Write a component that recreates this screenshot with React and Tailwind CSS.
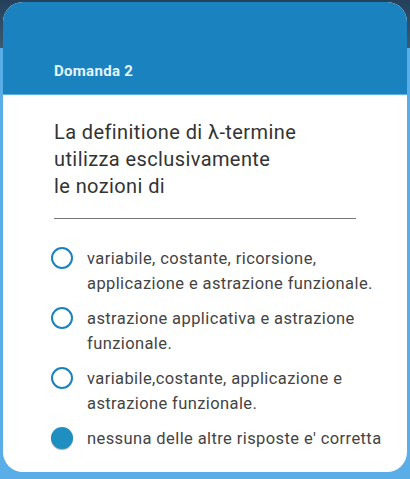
import { useState } from 'react'

const options = [
  'variabile, costante, ricorsione, applicazione e astrazione funzionale.',
  'astrazione applicativa e astrazione funzionale.',
  'variabile,costante, applicazione e astrazione funzionale.',
  "nessuna delle altre risposte e' corretta",
]

export default function App() {
  const [selected, setSelected] = useState(3)

  return (
    <div
      className="w-[410px] h-[479px] overflow-hidden bg-[linear-gradient(to_bottom,#24405a_0,#3a5b72_48px,#5aaee8_48px,#5aaee8_100%)] pt-[2px] px-[3px]"
      style={{ fontFamily: 'Roboto, "Noto Sans", sans-serif' }}
    >
      <div className="w-[404px] h-[470px] rounded-[20px] overflow-hidden bg-white flex flex-col">
        <div className="h-[93px] bg-[#1a83bf] border-b border-[#5ab3e6] flex items-end pl-[51px] pb-[15px]">
          <span className="text-[15px] tracking-[0.3px] font-bold text-[#e6f3fb] leading-none">Domanda 2</span>
        </div>

        <div className="pl-[51px] pr-[20px] pt-[24px]">
          <p className="text-[20px] tracking-[0.4px] leading-[27px] text-[#333]">
            La definitione di λ-termine
            <br />
            utilizza esclusivamente
            <br />
            le nozioni di
          </p>
          <div className="mt-[18px] w-[302px] h-px bg-[#777]" />

          <div className="mt-[27px] flex flex-col gap-[10px]">
            {options.map((text, i) => (
              <button
                key={i}
                onClick={() => setSelected(i)}
                className="flex items-start text-left -ml-[3px]"
              >
                <span
                  className={
                    i === selected
                      ? 'mt-[1px] w-[22px] h-[22px] shrink-0 rounded-full bg-[#1f8fc2] shadow-[0_1px_1px_rgba(0,0,0,0.35)]'
                      : 'mt-[1px] w-[22px] h-[22px] shrink-0 rounded-full border-[2.5px] border-[#1a83bf]'
                  }
                />
                <span className="ml-[14px] text-[16.5px] tracking-[0.4px] leading-[25px] text-[#444] w-[300px]">{text}</span>
              </button>
            ))}
          </div>
        </div>
      </div>
    </div>
  )
}
